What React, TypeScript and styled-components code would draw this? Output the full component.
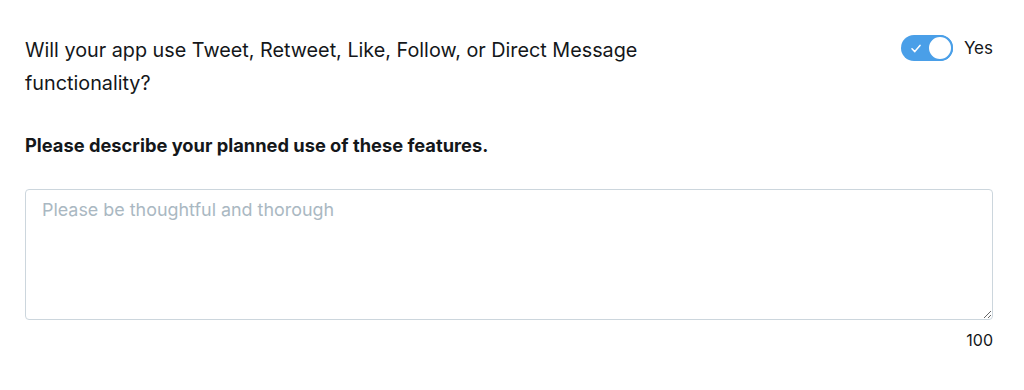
import styled, { createGlobalStyle } from "styled-components";

const GlobalStyle = createGlobalStyle`
  body {
    margin: 0;
    background: #ffffff;
    font-family: Inter, "Liberation Sans", Arial, sans-serif;
    color: #14171a;
  }
`;

const Page = styled.div`
  padding: 34px 31px 0 25px;
`;

const QuestionRow = styled.div`
  display: flex;
  justify-content: space-between;
  align-items: flex-start;
`;

const Question = styled.p`
  margin: 0;
  max-width: 660px;
  font-size: 19.8px;
  line-height: 33px;
`;

const ToggleWrap = styled.label`
  display: flex;
  align-items: center;
  gap: 11px;
  margin-top: 1px;
  font-size: 17px;
`;

const Track = styled.span<{ $on: boolean }>`
  position: relative;
  display: flex;
  align-items: center;
  width: 52px;
  height: 26px;
  border-radius: 13px;
  background: ${(p) => (p.$on ? "#4a9fe8" : "#ccd6dd")};
  box-sizing: border-box;
`;

const Knob = styled.span`
  position: absolute;
  right: 0;
  top: 0;
  width: 26px;
  height: 26px;
  border-radius: 50%;
  background: #fff;
  border: 2px solid #4a9fe8;
  box-sizing: border-box;
`;

const Check = styled.svg`
  margin-left: 10px;
`;

const Label = styled.h3`
  margin: 33px 0 0;
  font-size: 18.3px;
  font-weight: 700;
  line-height: 24px;
`;

const TextArea = styled.textarea`
  display: block;
  box-sizing: border-box;
  width: 100%;
  height: 131px;
  margin-top: 32px;
  padding: 9px 16px;
  border: 1px solid #ccd6dd;
  border-radius: 4px;
  font-family: inherit;
  font-size: 17.9px;
  line-height: 22px;
  color: #14171a;
  resize: vertical;
  outline: none;
  &::placeholder {
    color: #aab8c2;
  }
`;

const Counter = styled.div`
  margin-top: 10px;
  text-align: right;
  font-size: 16px;
  line-height: 20px;
`;

export default function App() {
  return (
    <>
      <GlobalStyle />
      <Page>
        <QuestionRow>
          <Question>
            Will your app use Tweet, Retweet, Like, Follow, or Direct Message
            functionality?
          </Question>
          <ToggleWrap>
            <Track $on>
              <Check width="10" height="9" viewBox="0 0 10 9">
                <path d="M1 4.8 L3.8 7.6 L9 1.4" fill="none" stroke="#fff" strokeWidth="1.5" strokeLinecap="round" strokeLinejoin="round" />
              </Check>
              <Knob />
            </Track>
            Yes
          </ToggleWrap>
        </QuestionRow>
        <Label>Please describe your planned use of these features.</Label>
        <TextArea placeholder="Please be thoughtful and thorough" />
        <Counter>100</Counter>
      </Page>
    </>
  );
}
